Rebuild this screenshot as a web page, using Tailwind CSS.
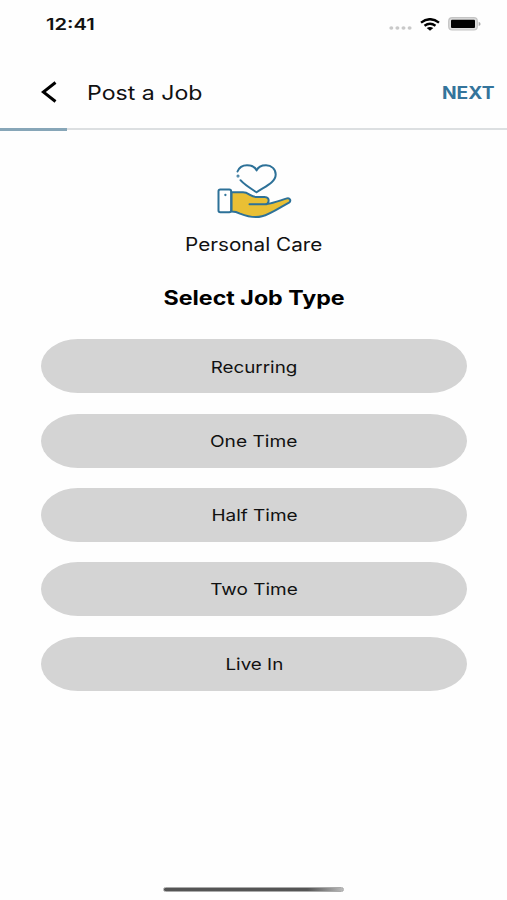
<!DOCTYPE html>
<html lang="en">
<head>
<meta charset="utf-8">
<title>Post a Job</title>
<script src="https://cdn.jsdelivr.net/npm/@tailwindcss/browser@4"></script>
</head>
<body class="bg-white">
<div class="flex h-[900px] w-[507px] flex-col overflow-hidden bg-[#fefefe] font-['Inter','Liberation_Sans',sans-serif] text-[#111]">
  <div class="flex h-[48px] shrink-0 items-center justify-between pr-[26px] pl-[46px]">
    <span class="origin-left scale-x-[1.3] pt-px text-[15.5px] leading-[20px] font-semibold">12:41</span>
    <div class="flex items-center">
      <svg class="mt-[8px] mr-[8px] h-[4px] w-[23px]" viewBox="0 0 23 4" fill="#c9c9c9"><ellipse cx="2.3" cy="2" rx="2" ry="1.8"/><ellipse cx="8.4" cy="2" rx="2" ry="1.8"/><ellipse cx="14.5" cy="2" rx="2" ry="1.8"/><ellipse cx="20.6" cy="2" rx="2" ry="1.8"/></svg>
      <svg class="mr-[8px] h-[13px] w-[20px]" viewBox="0 0 20 13" fill="none" stroke="#000" stroke-width="2.4"><path d="M1 4.6Q10-2.2 19 4.6M4.500 7.800Q10 3.700 15.500 7.800"/><path d="M6.700 10Q10 7.800 13.300 10L10 12.700Z" fill="#000" stroke="none"/></svg>
      <svg class="h-[14px] w-[33px]" viewBox="0 0 33 14"><rect x=".7" y=".7" width="28.600" height="12.300" rx="3.500" fill="#ddd" stroke="#c4c4c4" stroke-width="1.200"/><rect x="3" y="2.700" width="24" height="8.400" rx="1" fill="#000"/><path d="M30.700 4.800Q32.600 5.600 32.600 6.900T30.700 9Z" fill="#aaa"/></svg>
    </div>
  </div>
  <header class="flex h-[80px] shrink-0 items-center pt-[9px] pr-[12px] pl-[41px]">
    <svg class="mb-px h-[22px] w-[16px]" viewBox="0 0 16 22" fill="none" stroke="#000" stroke-width="3"><path d="M14.500 1.500L2.300 11L14.500 20.500"/></svg>
    <h1 class="ml-[30px] origin-left scale-x-[1.155] pt-px text-[20px] leading-[25px] font-normal">Post a Job</h1>
    <span class="ml-auto origin-right scale-x-[1.13] pt-px text-[17px] leading-[25px] font-bold text-[#34749b]">NEXT</span>
  </header>
  <div class="h-[2px] shrink-0 bg-[#dcdfe1]"><div class="h-[3px] w-[67px] bg-[#87a6b8]"></div></div>
  <main class="flex flex-col items-center pr-[40px] pl-[41px] pt-[32px]">
    <svg class="mr-[1px] h-[58px] w-[76px]" viewBox="0 0 76 58" fill="none" stroke="#2d7198" stroke-width="2" stroke-linecap="round" stroke-linejoin="round">
      <path d="M21.500 9.500C23 5.500 26.500 3.200 31 3.200C35.500 3.200 39.200 5 40.600 8.500C42 5 45.500 3.200 50 3.200C55.500 3.200 59.700 7.200 59.700 12.500C59.700 20.500 49 24.500 40.600 30.300C35.500 27 29 23.300 24.500 18.200"/>
      <circle cx="22" cy="14" r=".5"/>
      <path d="M15.500 30.300H27C33 30.300 34 34.900 40 34.900H48.500C52 34.900 53 37.500 52.500 39.400C52.400 40.800 52 41.900 50.500 42.100C59 40.800 65 38 71 36.400C73.800 35.700 75.500 38.800 73 40.600C64 45.500 54 52.500 46 54.300C38 56.500 30 54 24 51.600C21 50 19 49.500 15.500 49.500Z" fill="#e9bf34"/>
      <path d="M33.500 42.300H50.500"/>
      <rect x="2.500" y="27.500" width="12.600" height="22.800" rx="1.800" fill="#fff"/>
      <circle cx="9.400" cy="33" r=".5" stroke-width="1.300"/>
    </svg>
    <p class="mt-[13px] scale-x-[1.15] text-[18px] leading-[24px]">Personal Care</p>
    <h2 class="mt-[28px] scale-x-[1.19] pt-px text-[19.500px] leading-[25px] font-bold text-black">Select Job Type</h2>
    <div class="mt-[28.400px] flex w-full flex-col gap-[20.300px] text-[16.500px]">
      <button class="flex h-[54px] items-center justify-center rounded-[37px/27px] bg-[#d4d4d4] pt-[1px]"><span class="scale-x-[1.14]">Recurring</span></button>
      <button class="flex h-[54px] items-center justify-center rounded-[37px/27px] bg-[#d4d4d4] pt-[1px]"><span class="scale-x-[1.16]">One Time</span></button>
      <button class="flex h-[54px] items-center justify-center rounded-[37px/27px] bg-[#d4d4d4] pt-[1px]"><span class="scale-x-[1.15]">Half Time</span></button>
      <button class="flex h-[54px] items-center justify-center rounded-[37px/27px] bg-[#d4d4d4] pt-[1px]"><span class="scale-x-[1.15]">Two Time</span></button>
      <button class="flex h-[54px] items-center justify-center rounded-[37px/27px] bg-[#d4d4d4] pt-[1px]"><span class="scale-x-[1.14]">Live In</span></button>
    </div>
  </main>
  <div class="mt-auto mb-[8px] h-[5px] w-[181px] shrink-0 self-center rounded-full border border-[#aaa] bg-linear-to-r from-[#555] from-80% to-[#bbb]"></div>
</div>
</body>
</html>
